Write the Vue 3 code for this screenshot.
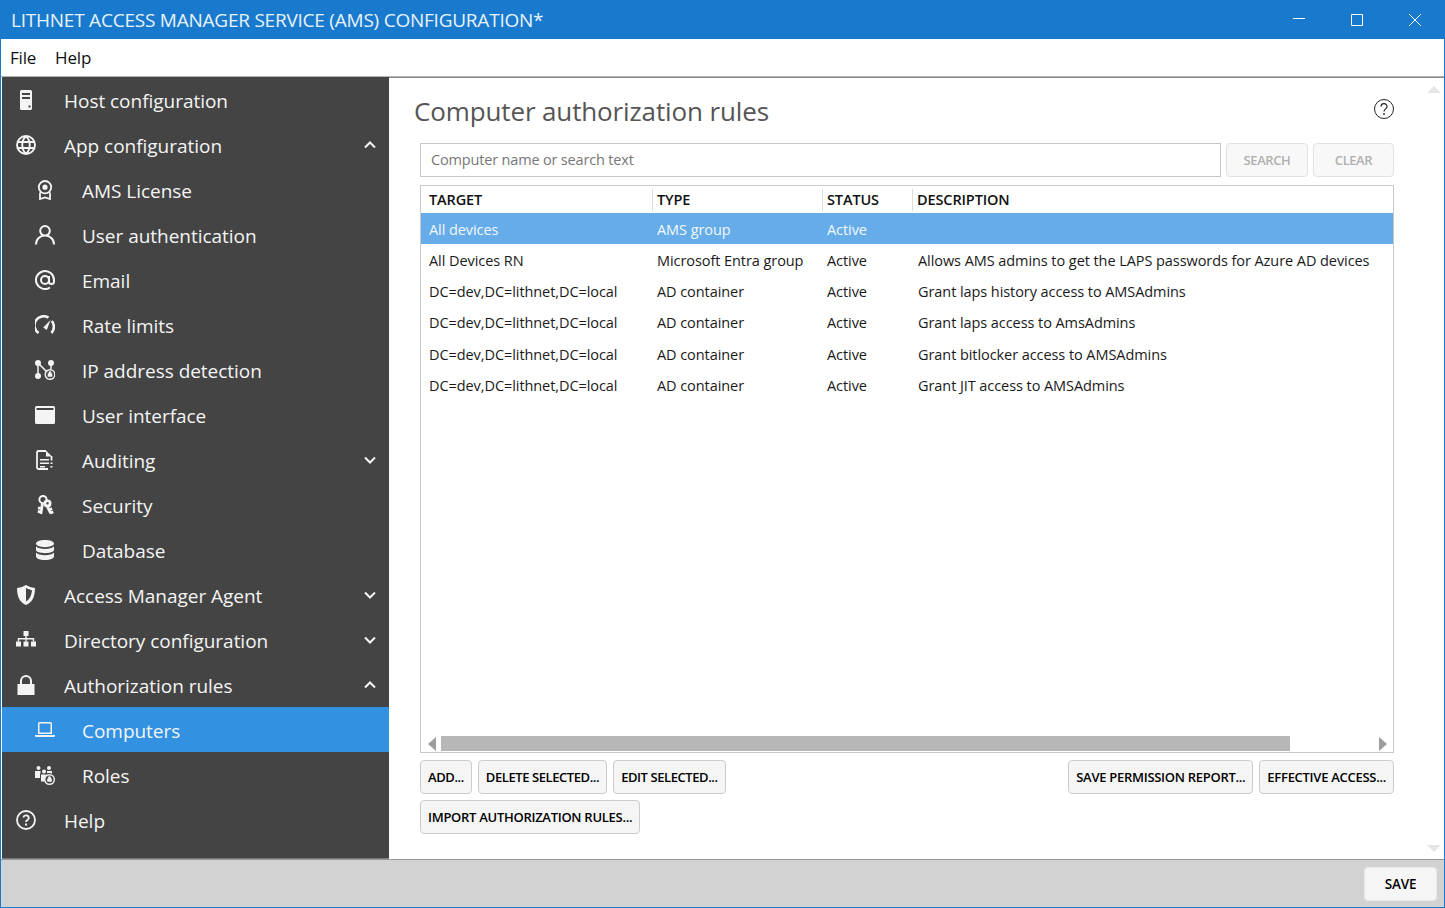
<script setup>
import { ref } from 'vue';

const s = { fill: 'none', stroke: 'currentColor' };

// icon shapes, all in a 20x20 box
const icons = {
  server: [{ d: 'M5.5 0h9A1.5 1.5 0 0 1 16 1.5v17a1.5 1.5 0 0 1-1.5 1.5h-9A1.5 1.5 0 0 1 4 18.5v-17A1.5 1.5 0 0 1 5.5 0zM6 3v2h8V3zM6 7v2h8V7zM12.5 15.5v2h2v-2z' }],
  globe: [{ d: 'M10 1a9 9 0 1 0 0 18a9 9 0 1 0 0-18zM10 1c-5 5-5 13 0 18M10 1c5 5 5 13 0 18M1.5 7h17M1.5 13h17', ...s, sw: 1.9 }],
  badge: [
    { d: 'M10 1a6.2 6.2 0 1 0 0 12.4a6.2 6.2 0 1 0 0-12.4zM5 12.5V19l5-1.6L15 19v-6.5', ...s, sw: 1.8 },
    { d: 'M10 4.6a2.6 2.6 0 1 0 0 5.2a2.6 2.6 0 1 0 0-5.2z' },
  ],
  user: [{ d: 'M10 1a4.8 4.8 0 1 0 0 9.6a4.8 4.8 0 1 0 0-9.6zM1 19.5c0-5.5 4-8.9 9-8.9s9 3.4 9 8.9', ...s, sw: 2 }],
  at: [{ d: 'M14 10a4 4 0 1 1-8 0a4 4 0 0 1 8 0zM14 6v5.5a2.5 2.5 0 0 0 5 0V10a9 9 0 1 0-4 7.5', ...s, sw: 2 }],
  gauge: [
    { d: 'M3.6 18A9 9 0 0 1 13.5 2.7', ...s, sw: 2.6 },
    { d: 'M16.800 6A9 9 0 0 1 16.400 18', ...s, sw: 2.6 },
    { d: 'M8.200 12.500L15.500 5L11.800 15z' },
  ],
  network: [
    { d: 'M3 3V16M3 3L12 12M16 3V9', ...s, sw: 1.5 },
    { d: 'M3 0a3 3 0 1 0 0 6a3 3 0 1 0 0-6zM16 0a3 3 0 1 0 0 6a3 3 0 1 0 0-6zM3 13a3 3 0 1 0 0 6a3 3 0 1 0 0-6z' },
    { d: 'M15 9.700a4.800 4.800 0 1 0 0 9.600a4.800 4.800 0 1 0 0-9.600z', ...s, sw: 1.4 },
    { d: 'M12.700 13.500h4.600v3.300h-4.600zM13.600 13.500v-.8a1.400 1.400 0 0 1 2.800 0v.8' },
  ],
  window: [{ d: 'M1.5 1h17A1.5 1.5 0 0 1 20 2.5v15a1.5 1.5 0 0 1-1.5 1.5h-17A1.5 1.5 0 0 1 0 17.5v-15A1.5 1.5 0 0 1 1.5 1zM1.5 3v2h17V3z' }],
  doc: [
    { d: 'M11 1H3.500A1.500 1.500 0 0 0 2 2.500v15A1.500 1.500 0 0 0 3.500 19H13M16.500 6v4.500', ...s, sw: 1.8 },
    { d: 'M11 .500v6h6zM5 9h9v1.600H5zM5 12.500h9v1.600H5zM5 16h5v1.600H5zM15.500 12.500h2v1.600h-2zM15.500 16h2v1.600h-2z' },
  ],
  keys: [
    { d: 'M8 1a3.600 3.600 0 1 0 0 7.200a3.600 3.600 0 1 0 0-7.200z', ...s, sw: 2 },
    { d: 'M12.500 4.500a4 4 0 1 0 0 8a4 4 0 1 0 0-8zM12.500 7a1.200 1.200 0 1 1 0 2.400a1.200 1.200 0 1 1 0-2.400z' },
    { d: 'M7.500 8L5.800 19M6 13.500l-3-.6M5.600 17l-2.800-.6M12.500 12L16 18.500M14 15l3-1.400M15.800 18l2.400-1.200', ...s, sw: 2.800 },
  ],
  database: [{ d: 'M10 0c5 0 9 1.5 9 3.6S15 7.2 10 7.2 1 5.7 1 3.6 5 0 10 0zM1 6.2C2.5 8 6 9 10 9s7.500-1 9-2.800V9.800C19 11.800 15 13.200 10 13.200S1 11.800 1 9.800zM1 12.500C2.500 14.300 6 15.200 10 15.200s7.500-.9 9-2.700V16.200C19 18.400 15 20 10 20S1 18.400 1 16.200z' }],
  shield: [{ d: 'M10 0c2.500 1.500 5.500 2.500 9 3 0 9-3 14.500-9 17C4 17.500 1 12 1 3c3.500-.5 6.500-1.500 9-3zM10 3v13.500c3.500-2 5.500-6 6-11.300-2.200-.4-4.200-1.200-6-2.200z' }],
  sitemap: [
    { d: 'M7.500 1h5v5h-5zM0 11.500h5v5H0zM7.500 11.500h5v5h-5zM15 11.500h5v5h-5z' },
    { d: 'M10 6v5.500M2.500 11.500V8.700h15v2.800', ...s, sw: 1.4 },
  ],
  lock: [{ d: 'M4 9V6a6 6 0 0 1 12 0v3h2.500v11H1.500V9zM6 9h8V6a4 4 0 0 0-8 0z' }],
  laptop: [{ d: 'M3 3.500A1.500 1.500 0 0 1 4.500 2h11A1.500 1.500 0 0 1 17 3.500V14H3zM4.500 3.500V12.500h11V3.500zM0 15h20v.8A1.200 1.200 0 0 1 18.800 17H1.200A1.200 1.200 0 0 1 0 15.800z' }],
  roles: [
    { d: 'M3.500 1a2 2 0 1 0 0 4a2 2 0 1 0 0-4zM14 1a2 2 0 1 0 0 4a2 2 0 1 0 0-4zM9 4.500a2 2 0 1 0 0 4a2 2 0 1 0 0-4zM0 6h5.500v2.500H5V13H0zM6 9.500h6v.300A5.500 5.500 0 0 0 9.500 15v1.500H6zM12 6h5v2.500a5.500 5.500 0 0 0-2-.3V8h-3z' },
    { d: 'M14.500 9.700a4.800 4.800 0 1 0 0 9.600a4.800 4.800 0 1 0 0-9.600z', ...s, sw: 1.4 },
    { d: 'M12.200 13.500h4.600v3.300h-4.600zM13.100 13.500v-.8a1.400 1.400 0 0 1 2.800 0v.8' },
  ],
  help: [
    { d: 'M10 1a9 9 0 1 0 0 18a9 9 0 1 0 0-18zM7.300 7.500a2.800 2.800 0 0 1 5.500.6c0 1.900-2.800 2-2.800 4', ...s, sw: 1.8 },
    { d: 'M9 13.600h2v2h-2z' },
  ],
};

const navItems = [
  { label: 'Host configuration', icon: 'server' },
  { label: 'App configuration', icon: 'globe', chevron: 'up' },
  { label: 'AMS License', icon: 'badge', sub: true },
  { label: 'User authentication', icon: 'user', sub: true },
  { label: 'Email', icon: 'at', sub: true },
  { label: 'Rate limits', icon: 'gauge', sub: true },
  { label: 'IP address detection', icon: 'network', sub: true },
  { label: 'User interface', icon: 'window', sub: true },
  { label: 'Auditing', icon: 'doc', sub: true, chevron: 'down' },
  { label: 'Security', icon: 'keys', sub: true },
  { label: 'Database', icon: 'database', sub: true },
  { label: 'Access Manager Agent', icon: 'shield', chevron: 'down' },
  { label: 'Directory configuration', icon: 'sitemap', chevron: 'down' },
  { label: 'Authorization rules', icon: 'lock', chevron: 'up' },
  { label: 'Computers', icon: 'laptop', sub: true, active: true },
  { label: 'Roles', icon: 'roles', sub: true },
  { label: 'Help', icon: 'help' },
];

const columns = ['TARGET', 'TYPE', 'STATUS', 'DESCRIPTION'];

const rows = [
  ['All devices', 'AMS group', 'Active', ''],
  ['All Devices RN', 'Microsoft Entra group', 'Active', 'Allows AMS admins to get the LAPS passwords for Azure AD devices'],
  ['DC=dev,DC=lithnet,DC=local', 'AD container', 'Active', 'Grant laps history access to AMSAdmins'],
  ['DC=dev,DC=lithnet,DC=local', 'AD container', 'Active', 'Grant laps access to AmsAdmins'],
  ['DC=dev,DC=lithnet,DC=local', 'AD container', 'Active', 'Grant bitlocker access to AMSAdmins'],
  ['DC=dev,DC=lithnet,DC=local', 'AD container', 'Active', 'Grant JIT access to AMSAdmins'],
];

const selected = ref(0);
</script>

<template>
  <div class="window">
    <header class="titlebar">
      <span class="title">LITHNET ACCESS MANAGER SERVICE (AMS) CONFIGURATION*</span>
      <div class="controls">
        <span class="control"><svg width="12" height="12"><path d="M0 4.500h12" stroke="#fff" /></svg></span>
        <span class="control"><svg width="12" height="12"><path d="M.5.500h11v11H.500z" fill="none" stroke="#fff" /></svg></span>
        <span class="control"><svg width="12" height="12"><path d="M0 0l12 12M12 0L0 12" fill="none" stroke="#fff" /></svg></span>
      </div>
    </header>

    <nav class="menubar">
      <span>File</span>
      <span>Help</span>
    </nav>

    <div class="body">
      <aside class="sidebar">
        <div
          v-for="item in navItems"
          :key="item.label"
          class="nav-item"
          :class="{ sub: item.sub, active: item.active }"
        >
          <span class="nav-icon">
            <svg width="20" height="20" viewBox="0 0 20 20">
              <path
                v-for="(p, i) in icons[item.icon]"
                :key="i"
                :d="p.d"
                :fill="p.fill || 'currentColor'"
                :stroke="p.stroke || 'none'"
                :stroke-width="p.sw || 0"
                fill-rule="evenodd"
              />
            </svg>
          </span>
          <span class="nav-label">{{ item.label }}</span>
          <svg v-if="item.chevron" class="chevron" width="12" height="8" viewBox="0 0 12 8">
            <path
              :d="item.chevron === 'up' ? 'M1 6.500L6 1.500l5 5' : 'M1 1.500l5 5 5-5'"
              fill="none"
              stroke="currentColor"
              stroke-width="2"
            />
          </svg>
        </div>
      </aside>

      <main class="main">
        <div class="content">
          <div class="page-head">
            <h1>Computer authorization rules</h1>
            <svg width="20" height="20" viewBox="0 0 20 20" class="help-icon">
              <circle cx="10" cy="10" r="9.500" fill="none" stroke="#222" />
              <path d="M7 7.500a3 3 0 0 1 6 .3c0 2-3 2.200-3 4.700" fill="none" stroke="#222" stroke-width="1.200" />
              <circle cx="10" cy="15" r=".9" fill="#222" />
            </svg>
          </div>

          <div class="inner">
            <div class="search-row">
              <input type="text" class="search-input" placeholder="Computer name or search text" />
              <button class="btn disabled search-btn">Search</button>
              <button class="btn disabled clear-btn">Clear</button>
            </div>

            <div class="grid">
              <div class="grid-head">
                <span v-for="c in columns" :key="c" class="head-cell">{{ c }}</span>
              </div>
              <div class="grid-body">
                <div
                  v-for="(row, i) in rows"
                  :key="i"
                  class="grid-row"
                  :class="{ selected: selected === i }"
                  @click="selected = i"
                >
                  <span v-for="(cell, j) in row" :key="j" class="cell">{{ cell }}</span>
                </div>
              </div>
              <div class="hscroll">
                <span class="arrow-left"></span>
                <span class="thumb"></span>
                <span class="arrow-right"></span>
              </div>
            </div>

            <div class="actions">
              <div class="actions-left">
                <div class="action-row">
                  <button class="btn add-btn">Add...</button>
                  <button class="btn">Delete selected...</button>
                  <button class="btn">Edit selected...</button>
                </div>
                <div class="action-row">
                  <button class="btn wide">Import authorization rules...</button>
                </div>
              </div>
              <div class="action-row">
                <button class="btn wide">Save permission report...</button>
                <button class="btn wide">Effective access...</button>
              </div>
            </div>
          </div>
        </div>

        <div class="vscroll">
          <span class="arrow-up"></span>
          <span class="arrow-down"></span>
        </div>
      </main>
    </div>

    <footer class="footer">
      <button class="btn save-btn">Save</button>
    </footer>
  </div>
</template>

<style scoped>
.window {
  width: 1445px;
  height: 908px;
  box-sizing: border-box;
  display: flex;
  flex-direction: column;
  border: 1px solid #197acd;
  border-top: none;
  font-family: "Open Sans", "Noto Sans", sans-serif;
  color: #000;
}

.titlebar {
  height: 39px;
  margin: 0 -1px;
  background: #197acd;
  color: #e8f2fb;
  display: flex;
  align-items: center;
  justify-content: space-between;
  flex-shrink: 0;
}

.title {
  margin-left: 11px;
  font-size: 19px;
  letter-spacing: -0.23px;
  white-space: nowrap;
}

.controls {
  display: flex;
  margin-right: 1px;
}

.control {
  width: 58px;
  height: 39px;
  display: flex;
  align-items: center;
  justify-content: center;
}

.menubar {
  height: 37px;
  flex-shrink: 0;
  display: flex;
  align-items: center;
  gap: 19px;
  padding-left: 9px;
  font-size: 17px;
  letter-spacing: -0.2px;
  color: #111;
  background: #fff;
}

.body {
  flex: 1;
  min-height: 0;
  display: flex;
  border-top: 1px solid #b4b4b4;
}

.sidebar {
  width: 387px;
  margin-left: 1px;
  flex-shrink: 0;
  background: #444;
  color: #f4f4f4;
  box-sizing: border-box;
  border-bottom: 1px solid #777;
}

.nav-item {
  height: 45px;
  display: flex;
  align-items: center;
  padding-left: 14px;
  padding-right: 13px;
  font-size: 19px;
  letter-spacing: -0.03px;
}

.nav-item.sub {
  padding-left: 33px;
}

.nav-item.active {
  background: #3291e0;
}

.nav-icon {
  width: 20px;
  height: 20px;
  margin-right: 28px;
  flex-shrink: 0;
  display: flex;
}

.nav-item.sub .nav-icon {
  margin-right: 27px;
}

.nav-label {
  flex: 1;
  position: relative;
  top: 1px;
  white-space: nowrap;
}

.chevron {
  flex-shrink: 0;
}

.main {
  flex: 1;
  min-width: 0;
  display: flex;
  border-top: 1px solid #888;
  background: #fff;
}

.content {
  flex: 1;
  min-width: 0;
  padding-left: 25px;
  margin-right: 33px;
}

.page-head {
  height: 65px;
  display: flex;
  justify-content: space-between;
  align-items: flex-start;
}

.page-head h1 {
  margin: 15px 0 0;
  font-size: 26px;
  line-height: 36px;
  font-weight: 400;
  letter-spacing: -0.13px;
  color: #555;
}

.help-icon {
  margin-top: 21px;
}

.inner {
  margin-left: 6px;
}

.search-row {
  display: flex;
  gap: 5px;
  height: 34px;
}

.search-input {
  flex: 1;
  min-width: 0;
  box-sizing: border-box;
  border: 1px solid #c8c8c8;
  padding: 0 10px 2px;
  font: inherit;
  font-size: 14.500px;
  letter-spacing: -0.17px;
  outline: none;
}

.search-input::placeholder {
  color: #777;
  opacity: 1;
}

.btn {
  height: 34px;
  box-sizing: border-box;
  border: 1px solid #ccc;
  border-radius: 4px;
  background: #f5f5f5;
  padding: 0 7px;
  font-family: inherit;
  font-size: 13px;
  font-weight: 600;
  letter-spacing: -0.42px;
  text-transform: uppercase;
  color: #000;
  white-space: nowrap;
}

.btn.wide {
  letter-spacing: -0.28px;
}

.btn.disabled {
  color: #b0b0b0;
  border-color: #e2e2e2;
  background: #f8f8f8;
}

.search-btn {
  width: 82px;
}

.clear-btn {
  width: 81px;
}

.grid {
  margin-top: 8px;
  height: 568px;
  box-sizing: border-box;
  border: 1px solid #c8c8c8;
  display: flex;
  flex-direction: column;
}

.grid-head,
.grid-row {
  display: grid;
  grid-template-columns: 231px 170px 90px 1fr;
}

.grid-head {
  height: 27px;
  align-items: center;
}

.head-cell {
  font-size: 14.500px;
  font-weight: 600;
  letter-spacing: -0.12px;
  padding-left: 4px;
  line-height: 22px;
  border-left: 1px solid #ddd;
  color: #111;
}

.head-cell:first-child {
  padding-left: 8px;
  border-left: none;
}

.grid-body {
  flex: 1;
}

.grid-row {
  height: 31.250px;
  box-sizing: border-box;
  padding-top: 1px;
  align-items: center;
  font-size: 14.500px;
  letter-spacing: -0.07px;
  color: #1a1a1a;
}

.grid-row.selected {
  background: #66ace9;
  color: #f2f8fd;
}

.cell {
  padding-left: 5px;
  white-space: nowrap;
}

.cell:first-child {
  padding-left: 8px;
}

.cell:last-child {
  padding-left: 6px;
}

.hscroll {
  height: 15px;
  margin-bottom: 1px;
  display: flex;
  align-items: center;
  padding: 0 6px 0 7px;
}

.thumb {
  width: 849px;
  height: 15px;
  margin-left: 5px;
  background: #b7b7b7;
}

.arrow-left,
.arrow-right {
  width: 0;
  height: 0;
  border-top: 7px solid transparent;
  border-bottom: 7px solid transparent;
}

.arrow-left {
  border-right: 8px solid #9e9e9e;
}

.arrow-right {
  margin-left: auto;
  border-left: 8px solid #9e9e9e;
}

.actions {
  margin-top: 7px;
  display: flex;
  justify-content: space-between;
  align-items: flex-start;
}

.actions-left {
  display: flex;
  flex-direction: column;
  gap: 6px;
}

.action-row {
  display: flex;
  gap: 6px;
}

.vscroll {
  width: 14px;
  margin-right: 3px;
  padding: 8px 0 7px;
  box-sizing: border-box;
  display: flex;
  flex-direction: column;
  justify-content: space-between;
  flex-shrink: 0;
}

.arrow-up,
.arrow-down {
  width: 0;
  height: 0;
  border-left: 7px solid transparent;
  border-right: 7px solid transparent;
}

.arrow-up {
  border-bottom: 7px solid #e6e6e6;
}

.arrow-down {
  border-top: 7px solid #e6e6e6;
}

.footer {
  height: 48px;
  flex-shrink: 0;
  box-sizing: border-box;
  background: #d2d2d2;
  border-top: 1px solid #999;
  display: flex;
  align-items: center;
  justify-content: flex-end;
  padding-right: 7px;
}

.save-btn {
  width: 73px;
  border-color: #e8e8e8;
  font-size: 13.500px;
  letter-spacing: -0.2px;
}
</style>

<style>
html,
body {
  margin: 0;
  overflow: hidden;
  background: #fff;
}
</style>
